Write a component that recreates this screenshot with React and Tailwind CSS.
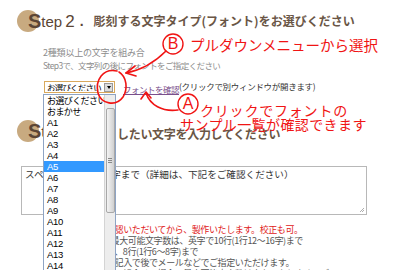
import React from 'react';

const JP = "font-['Noto_Sans_CJK_JP','Noto_Sans',sans-serif]";
const AR = "font-['Liberation_Sans','Noto_Sans_CJK_JP',sans-serif]";

const items = ['お選びください', 'おまかせ', ...Array.from({ length: 18 }, (_, i) => `A${i + 1}`)];

function StepHead({ num, text }) {
  return (
    <div className="flex items-center h-[24px] pl-[17px]">
      <div className="w-[22px] h-[22px] rounded-full bg-[#c8aa80] shrink-0" />
      <span className={`${AR} -ml-[11px] text-[20px] font-bold text-[#5b4535] leading-none`}>S</span>
      <span className={`${AR} text-[15px] text-[#5b4535] leading-none`}>tep</span>
      {num && (
        <>
          <span className={`${AR} ml-[3px] text-[17px] text-[#5b4535] leading-none`}>{num}</span>
          <span className={`${AR} ml-[5px] text-[14px] text-[#5b4535] leading-none font-bold`}>.</span>
        </>
      )}
      <span className={`${JP} ml-[10px] text-[12px] font-bold text-[#6a5646] leading-none`}>{text}</span>
    </div>
  );
}

export default function App() {
  return (
    <div className={`relative w-[400px] h-[270px] overflow-hidden bg-white ${JP}`}>
      {/* Step 2 */}
      <div className="pt-[9px]">
        <StepHead num="2" text="彫刻する文字タイプ(フォント)をお選びください" />
      </div>
      <div className="pl-[43px] mt-[13px] text-[9px] text-[#8c8c8c] leading-[13px] tracking-[-0.2px]">
        <div>2種類以上の文字を組み合</div>
        <div className="text-[8.5px] tracking-[-0.6px]">Step3で、文字列の後にフォントをご指定ください</div>
      </div>
      <div className="flex items-center pl-[44px] mt-[9px] h-[12px]">
        <div className="w-[71px] h-[12px] border border-[#d9a95c] flex items-center bg-white">
          <span className="flex-1 text-[8.5px] leading-none pl-[2px] text-black tracking-[-0.8px] whitespace-nowrap overflow-hidden">お選びください</span>
          <span className="w-[9px] h-[9px] mr-[1px] bg-[#dcdcdc] border border-[#9a9a9a] flex items-center justify-center">
            <span className="w-0 h-0 border-l-[2.5px] border-r-[2.5px] border-t-[3px] border-l-transparent border-r-transparent border-t-black" />
          </span>
        </div>
        <span className="ml-[8px] text-[8.5px] text-[#7a4f8c] underline leading-none tracking-[-0.5px] mt-[4px]">フォントを確認</span>
        <span className="text-[8.5px] text-[#333] leading-none tracking-[-0.3px] -mt-[2px]">(クリックで別ウィンドウが開きます)</span>
      </div>

      {/* Step 3 */}
      <div className="mt-[26px]">
        <StepHead text="" />
      </div>
      <div className="pl-[117px] -mt-[16px] text-[12px] font-bold text-[#6a5646] leading-[14px] tracking-[-0.3px]">したい文字を入力してください</div>

      <div className="ml-[21px] mt-[25px] w-[346px] h-[49px] border border-[#b8b8b8] relative">
        <div className="pl-[3px] pt-[1px] text-[9.6px] text-[#333] leading-[13px] whitespace-nowrap">
          スペース込みで25文字まで（詳細は、下記をご確認ください）
        </div>
        <svg className="absolute right-[1px] bottom-[1px]" width="6" height="6" viewBox="0 0 6 6">
          <path d="M5 1 L1 5 M5 3 L3 5" stroke="#999" strokeWidth="0.8" />
        </svg>
      </div>

      <div className="pl-[63px] mt-[9px] text-[9px] leading-[11px] whitespace-nowrap tracking-[-0.4px]">
        <div className="text-[#e02020]">※内容をご確認いただいてから、製作いたします。校正も可。</div>
        <div className="text-[#555]">※刻印1面の最大可能文字数は、英字で10行(1行12〜16字)まで</div>
        <div className="text-[#555]">　漢字かなで、8行(1行6〜8字)まで</div>
        <div className="text-[#555]">※書体名はご記入で後でメールなどでご指定いただけます。</div>
        <div className="text-[#555]">※複数書体との組合せの場合、最大可能文字数は少なくなります。ご</div>
      </div>

      {/* Open dropdown list */}
      <div className="absolute left-[43px] top-[94px] w-[73px] h-[190px] border border-[#8ea4c4] bg-white flex">
        <div className="flex-1 overflow-hidden">
          {items.map((it, i) => (
            <div
              key={it}
              className={`h-[11px] flex items-center pl-[3px] leading-none whitespace-nowrap ${i === 6 ? 'bg-[#3399ff] text-white' : 'text-black'} ${i < 2 ? `${JP} text-[9px] tracking-[-0.6px]` : `${AR} text-[9.5px] tracking-[-0.3px]`}`}
            >
              {it}
            </div>
          ))}
        </div>
        <div className="w-[11px] bg-[#ededed] border-l border-[#d4d4d4] flex flex-col items-center">
          <div className="h-[13px]" />
          <div className="w-[9px] h-[105px] rounded-[2px] border border-[#a8a8a8] bg-gradient-to-r from-[#f4f4f4] to-[#d0d0d0] flex items-center justify-center">
            <div className="flex flex-col gap-[1px]">
              <div className="w-[4px] h-px bg-[#888]" />
              <div className="w-[4px] h-px bg-[#888]" />
              <div className="w-[4px] h-px bg-[#888]" />
            </div>
          </div>
        </div>
      </div>

      {/* Annotations */}
      <svg className="absolute left-0 top-0 pointer-events-none" width="400" height="270" viewBox="0 0 400 270">
        <g fill="none" stroke="#f01414" strokeWidth="1.6" strokeLinecap="round">
          <path d="M117 71 C103 68 95 80 98 93 C101 104 116 107 123 97 C128 89 127 77 119 72" />
          <path d="M166 51 C155 62 142 70 126 73" />
          <path d="M126 73 L135 66 M126 73 L136 76" />
          <path d="M178 110 C162 112 150 105 146 93" />
          <path d="M146 92 L141 99 M146 92 L151 98" />
        </g>
        <circle cx="173" cy="44" r="10" fill="none" stroke="#f01414" strokeWidth="1.4" />
        <circle cx="188" cy="104" r="10" fill="none" stroke="#f01414" strokeWidth="1.4" />
      </svg>
      <div className={`absolute left-[166px] top-[35px] w-[14px] h-[18px] flex items-center justify-center text-[16px] text-[#f01414] leading-none ${AR}`}>B</div>
      <div className={`absolute left-[181px] top-[95px] w-[14px] h-[18px] flex items-center justify-center text-[16px] text-[#f01414] leading-none ${AR}`}>A</div>
      <div className="absolute left-[190px] top-[36px] text-[14.5px] text-[#f01414] leading-[18px] whitespace-nowrap">プルダウンメニューから選択</div>
      <div className="absolute left-[200px] top-[101px] text-[14px] text-[#f01414] leading-[18px] tracking-[0.8px] whitespace-nowrap">クリックでフォントの</div>
      <div className="absolute left-[180px] top-[115px] text-[14px] text-[#f01414] leading-[18px] tracking-[0.4px] whitespace-nowrap">サンプル一覧が確認できます</div>
    </div>
  );
}
